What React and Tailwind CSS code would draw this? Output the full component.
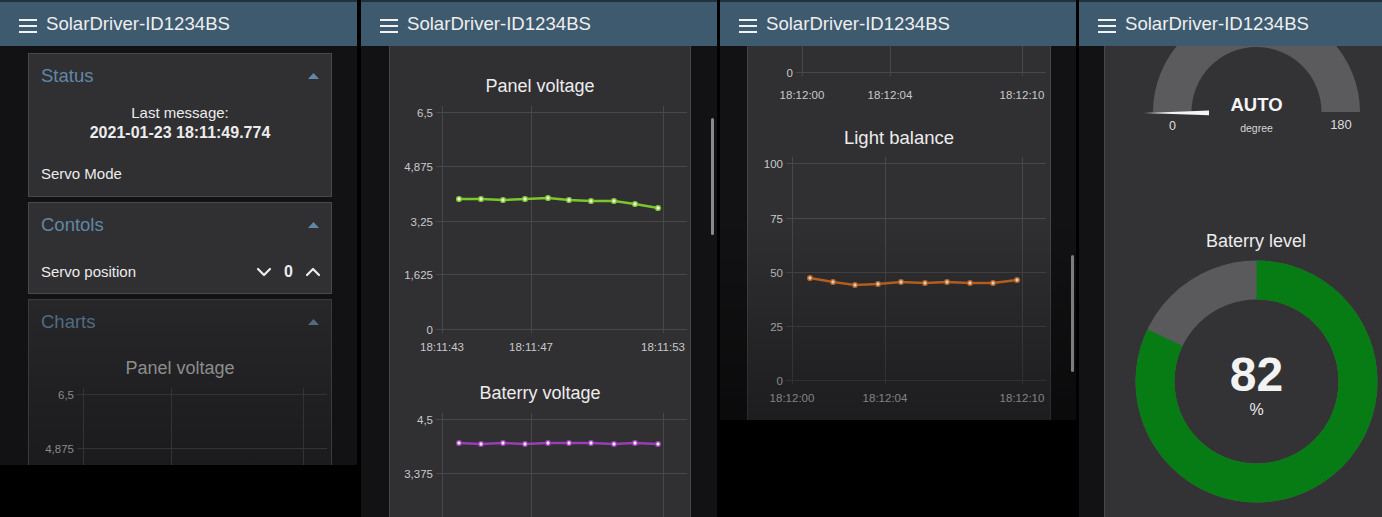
import { ChevronDown, ChevronUp } from "lucide-react";

const SVG_FONT = "'Liberation Sans', Arial, sans-serif";

function Header() {
  return (
    <div className="h-[46px] shrink-0 border-t-2 border-[#25313a] bg-[#3e5a6f] flex items-center pt-[1px]">
      <div className="ml-[19px] mt-[2px] flex flex-col gap-[4px]">
        <span className="block w-[18px] h-[2px] bg-[#f2f2f2]" />
        <span className="block w-[18px] h-[2px] bg-[#f2f2f2]" />
        <span className="block w-[18px] h-[2px] bg-[#f2f2f2]" />
      </div>
      <span className="ml-[9px] text-[18.6px] leading-none text-[#eeeeee]">SolarDriver-ID1234BS</span>
    </div>
  );
}

function GroupTitle({ title, dim }) {
  return (
    <div className="h-[44px] flex items-center justify-between px-[12px]">
      <span className={dim ? "text-[18.5px] text-[#4e6c84]" : "text-[18.5px] text-[#6088a6]"}>{title}</span>
      <svg width="11" height="6" className="block">
        <polygon points="0,6 5.5,0 11,6" fill={dim ? "#4e6c84" : "#6088a6"} />
      </svg>
    </div>
  );
}

// simple line chart, coordinates in px of the svg box
function Chart({ w, h, left, right, vTop, vBottom, yTicks = [], xTicks = [], xLabelY, points, color, grid = "#48474a", label = "#cacaca" }) {
  return (
    <svg width={w} height={h} className="block shrink-0" fontFamily={SVG_FONT}>
      {xTicks.map(([t, x]) => (
        <line key={"v" + t} x1={x + 0.5} x2={x + 0.5} y1={vTop} y2={vBottom} stroke={grid} />
      ))}
      {yTicks.map(([t, y]) => (
        <line key={"h" + t} x1={left - 6} x2={right} y1={y + 0.5} y2={y + 0.5} stroke={grid} />
      ))}
      {yTicks.map(([t, y]) => (
        <text key={"yl" + t} x={left - 9} y={y + 4.5} textAnchor="end" fontSize="11.5" fill={label}>{t}</text>
      ))}
      {xLabelY &&
        xTicks.map(([t, x]) => (
          <text key={"xl" + t} x={x} y={xLabelY} textAnchor="middle" fontSize="11.5" fill={label}>{t}</text>
        ))}
      {points && (
        <>
          <polyline
            points={points.map((p) => p.join(",")).join(" ")}
            fill="none"
            stroke={color}
            strokeWidth="2.5"
            strokeLinejoin="round"
          />
          {points.map(([x, y], i) => (
            <circle key={i} cx={x} cy={y} r="2.4" fill="#f1efe9" stroke={color} strokeWidth="1.4" />
          ))}
        </>
      )}
    </svg>
  );
}

const pts = (xs, ys) => xs.map((x, i) => [x, ys[i]]);

const X2 = [69, 91, 113, 135, 158, 179, 201, 224, 245, 268];
const panelV = pts(X2, [102, 102, 103, 102, 101, 103, 104, 104, 107, 111]);
const batV = pts(X2, [39, 40, 39, 40, 39, 39, 39, 40, 39, 40]);
const light = pts(
  [62, 85, 107, 130, 153, 177, 199, 222, 245, 269],
  [129, 133, 136, 135, 133, 134, 133, 134, 134, 131]
);

function StatusPanel() {
  return (
    <div className="w-[357px] h-[465px] shrink-0 flex flex-col bg-[#121113] overflow-hidden">
      <Header />
      <div className="flex-1 min-h-0 pt-[7px] pl-[28px] flex flex-col gap-[5px]">
        <div className="w-[304px] border border-[#49484b] bg-[#302f32]">
          <GroupTitle title="Status" />
          <div className="mt-[5px] text-center text-[15px] leading-[20px] text-[#ececec]">
            <div>Last message:</div>
            <div className="font-bold text-[16px]">2021-01-23 18:11:49.774</div>
          </div>
          <div className="mt-[21px] h-[20px] leading-[20px] px-[12px] text-[15px] text-[#ececec]">Servo Mode</div>
          <div className="h-[12px]" />
        </div>

        <div className="w-[304px] border border-[#49484b] bg-[#302f32] pb-[1px]">
          <GroupTitle title="Contols" />
          <div className="mt-[5px] h-[40px] flex items-center pl-[12px] pr-[6px] text-[15px] text-[#ececec]">
            <span className="flex-1">Servo position</span>
            <ChevronDown size={24} strokeWidth={2.2} />
            <span className="mx-[8px] font-bold text-[16px]">0</span>
            <ChevronUp size={24} strokeWidth={2.2} />
          </div>
        </div>

        <div className="w-[304px] flex-1 min-h-0 border-x border-t border-[#3a393c] bg-linear-to-b from-[#272629] to-[#1b1a1c] overflow-hidden">
          <GroupTitle title="Charts" dim />
          <div className="mt-[13px] h-[22px] leading-[22px] text-center text-[18px] text-[#8d8d8d]">Panel voltage</div>
          <Chart
            w={302}
            h={90}
            left={54}
            right={298}
            vTop={9}
            vBottom={100}
            yTicks={[["6,5", 15], ["4,875", 69]]}
            xTicks={[["a", 54], ["b", 142], ["c", 274]]}
            grid="#333235"
            label="#8a8a8a"
          />
        </div>
      </div>
    </div>
  );
}

function VoltagePanel() {
  return (
    <div className="relative ml-[4px] w-[356px] h-[517px] shrink-0 flex flex-col bg-[#121113] overflow-hidden">
      <Header />
      <div className="flex-1 min-h-0 flex">
        <div className="ml-[28px] w-[302px] border-x border-[#464548] bg-[#302f32] flex flex-col items-center overflow-hidden">
          <div className="mt-[29px] h-[22px] leading-[22px] text-[18px] text-[#ececec]">Panel voltage</div>
          <Chart
            w={300}
            h={285}
            left={52}
            right={297}
            vTop={9}
            vBottom={236}
            yTicks={[["6,5", 15], ["4,875", 69], ["3,25", 124], ["1,625", 177], ["0", 232]]}
            xTicks={[["18:11:43", 52], ["18:11:47", 141], ["18:11:53", 273]]}
            xLabelY={254}
            points={panelV}
            color="#7cc52c"
          />
          <div className="h-[22px] leading-[22px] text-[18px] text-[#ececec]">Baterry voltage</div>
          <Chart
            w={300}
            h={113}
            left={52}
            right={297}
            vTop={9}
            vBottom={200}
            yTicks={[["4,5", 15], ["3,375", 69]]}
            xTicks={[["a", 52], ["b", 141], ["c", 273]]}
            points={batV}
            color="#9a3db6"
          />
        </div>
      </div>
      <div className="absolute left-[350px] top-[118px] w-[3px] h-[117px] rounded-full bg-[#8a8a8a]" />
    </div>
  );
}

function LightPanel() {
  return (
    <div className="relative ml-[3px] w-[356px] h-[420px] shrink-0 flex flex-col bg-[#121113] overflow-hidden">
      <Header />
      <div className="flex-1 min-h-0 flex">
        <div className="ml-[27px] w-[304px] border-x border-[#464548] bg-[#302f32] flex flex-col items-center overflow-hidden">
          <Chart
            w={302}
            h={81}
            left={54}
            right={298}
            vTop={-10}
            vBottom={30}
            yTicks={[["0", 26]]}
            xTicks={[["18:12:00", 54], ["18:12:04", 142], ["18:12:10", 274]]}
            xLabelY={53}
          />
          <div className="h-[22px] leading-[22px] text-[18.5px] text-[#ececec]">Light balance</div>
          <Chart
            w={302}
            h={271}
            left={44}
            right={298}
            vTop={8}
            vBottom={235}
            yTicks={[["100", 14], ["75", 69], ["50", 123], ["25", 177], ["0", 231]]}
            xTicks={[["18:12:00", 44], ["18:12:04", 137], ["18:12:10", 274]]}
            xLabelY={253}
            points={light}
            color="#cf6a1f"
          />
        </div>
      </div>
      <div className="pointer-events-none absolute inset-x-0 top-[46px] bottom-0 bg-linear-to-b from-transparent from-45% to-black/40" />
      <div className="absolute left-[351px] top-[255px] w-[3px] h-[117px] rounded-full bg-[#7c7c7c]" />
    </div>
  );
}

function GaugePanel() {
  const circ = 2 * Math.PI * 101.5;
  return (
    <div className="ml-[3px] w-[303px] h-[517px] shrink-0 flex flex-col bg-[#121113] overflow-hidden">
      <Header />
      <div className="flex-1 min-h-0 flex">
        <div className="ml-[25px] shrink-0 border-l border-[#47464a] bg-[#333235] w-[303px] flex flex-col items-center">
          <svg width="303" height="100" className="block shrink-0" fontFamily={SVG_FONT}>
            <path d="M48 66 A103.5 103.5 0 0 1 255 66 L216.5 66 A65 65 0 0 0 86.5 66 Z" fill="#5b5a5d" />
            <polygon points="39,67 104,64.6 104,69.2" fill="#f4f4f4" />
            <text x="151.5" y="65" textAnchor="middle" fontSize="18.5" fontWeight="bold" fill="#f5f5f5">AUTO</text>
            <text x="67.5" y="83.5" textAnchor="middle" fontSize="12.5" fill="#dddddd">0</text>
            <text x="236" y="82.5" textAnchor="middle" fontSize="13" fill="#dddddd">180</text>
            <text x="151.5" y="85.5" textAnchor="middle" fontSize="10.5" fill="#d6d6d6">degree</text>
          </svg>
          <div className="mt-[84px] h-[22px] leading-[22px] text-[18px] text-[#ececec]">Baterry level</div>
          <svg width="303" height="265" className="block shrink-0" fontFamily={SVG_FONT}>
            <circle cx="151.5" cy="129.5" r="101.5" fill="none" stroke="#5a595c" strokeWidth="39" />
            <circle
              cx="151.5"
              cy="129.5"
              r="101.5"
              fill="none"
              stroke="#077c14"
              strokeWidth="39"
              strokeDasharray={`${circ * 0.82} ${circ}`}
              transform="rotate(-90 151.5 129.5)"
            />
            <text x="151.5" y="139" textAnchor="middle" fontSize="48" fontWeight="bold" fill="#f3f3f3">82</text>
            <text x="151.5" y="163" textAnchor="middle" fontSize="16" fill="#e8e8e8">%</text>
          </svg>
        </div>
      </div>
    </div>
  );
}

export default function App() {
  return (
    <div className="w-[1382px] h-[517px] flex items-start bg-black overflow-hidden font-['Liberation_Sans',Arial,sans-serif]">
      <StatusPanel />
      <VoltagePanel />
      <LightPanel />
      <GaugePanel />
    </div>
  );
}
